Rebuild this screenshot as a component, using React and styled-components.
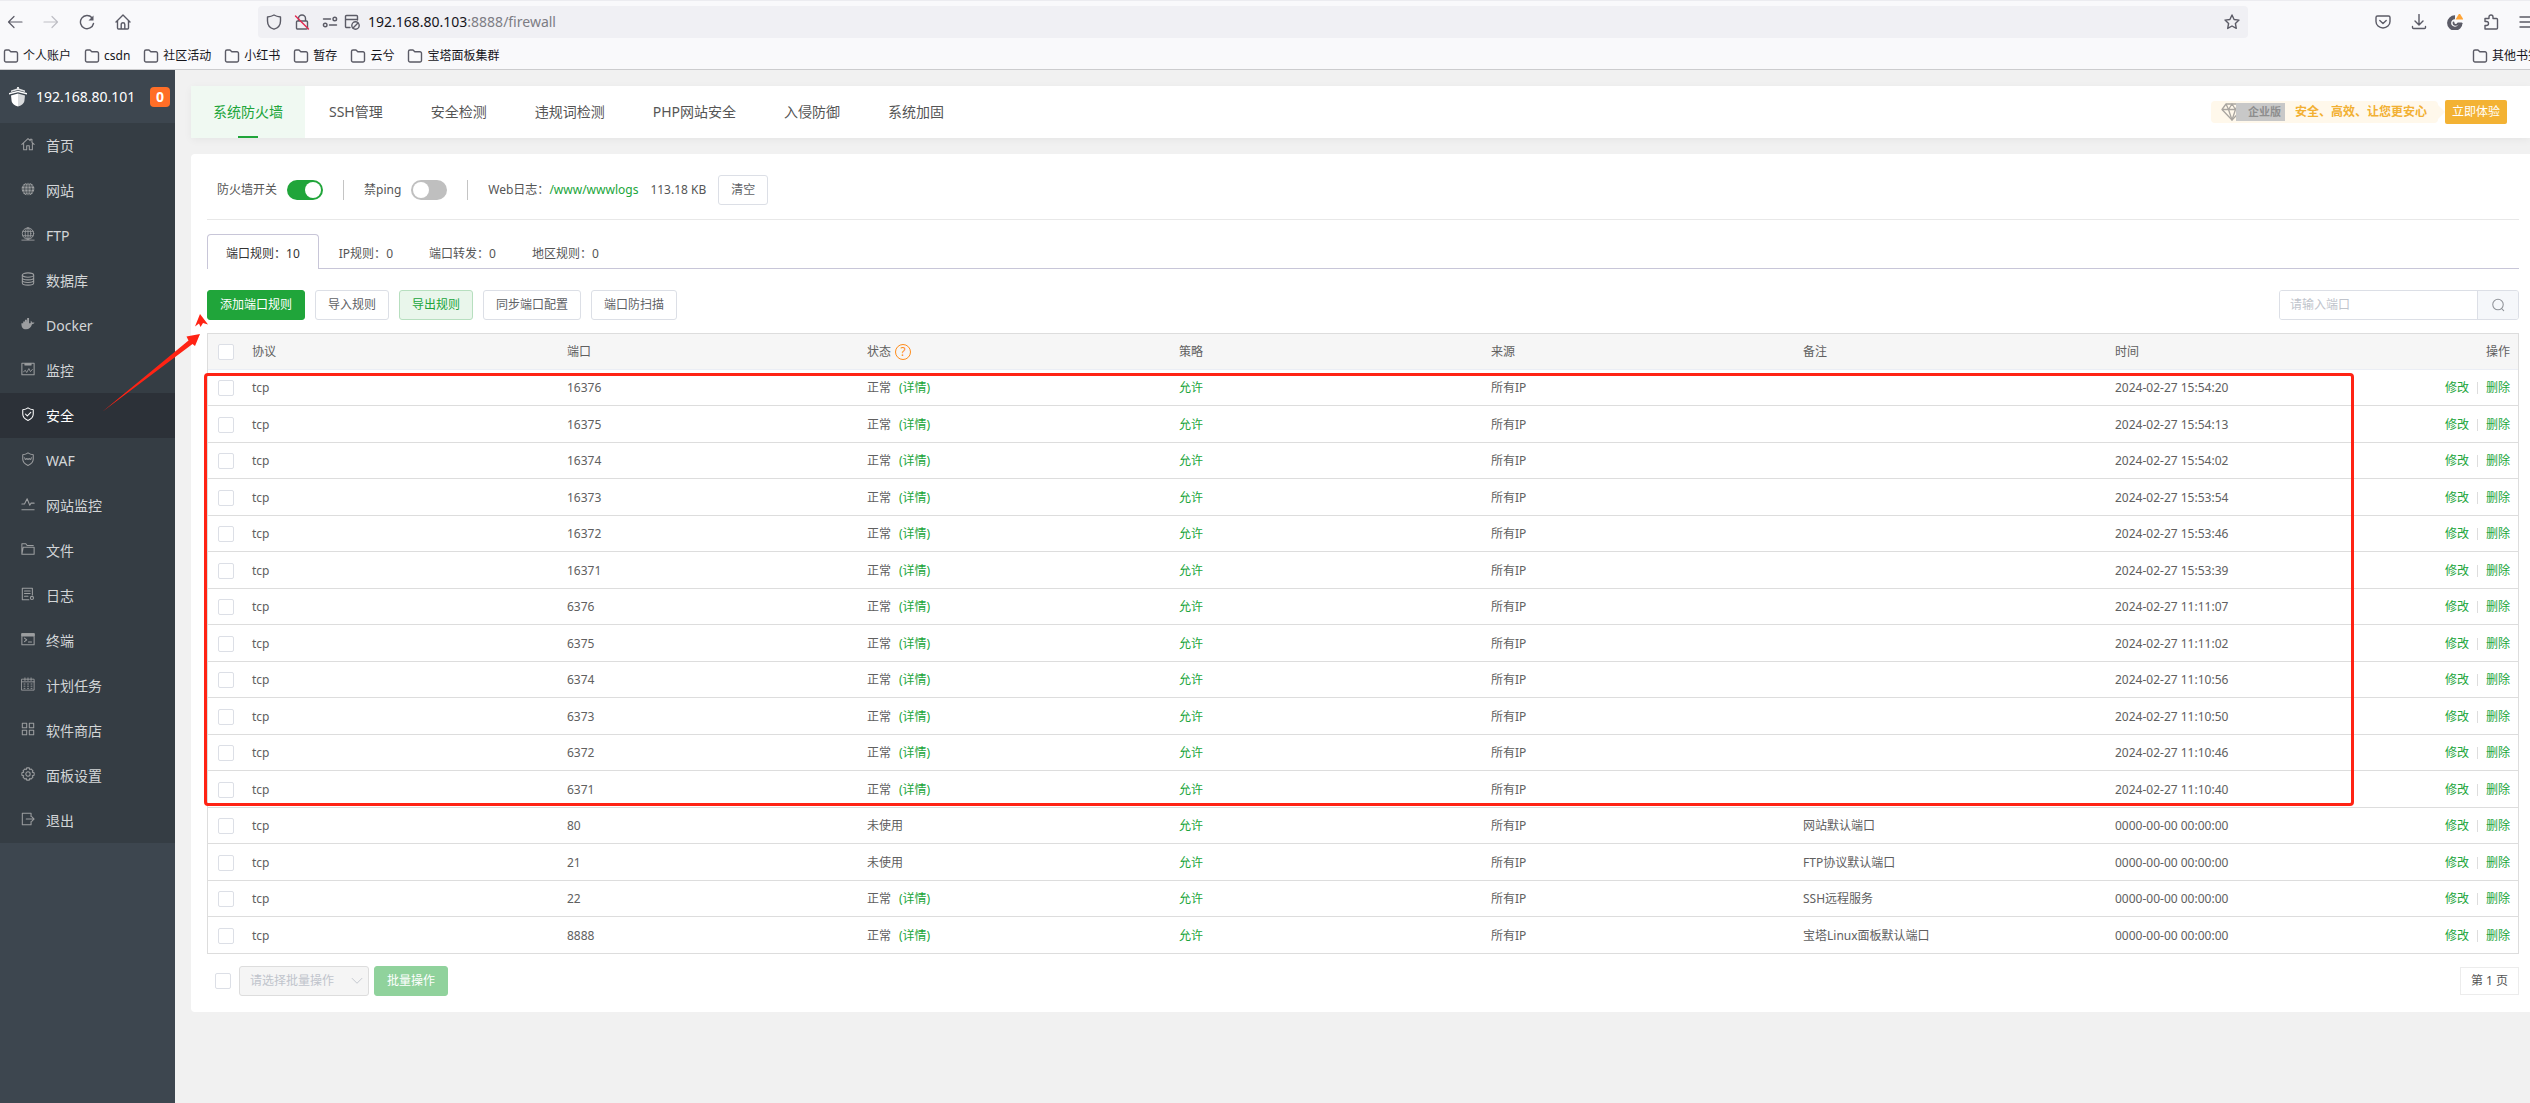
import styled, { createGlobalStyle } from "styled-components";

const GlobalStyle = createGlobalStyle`
    *, *::before, *::after {
        box-sizing: border-box;
    }
    body {
        margin: 0;
        overflow-x: hidden;
        background: #f1f1f1;
        color: #555;
        font-family: "Noto Sans", "Noto Sans CJK SC", sans-serif;
        font-size: 12px;
        line-height: 18px;
    }
    button, input, select {
        font-family: inherit;
        font-size: inherit;
        line-height: inherit;
    }
    a {
        text-decoration: none;
    }
`;

const Window = styled.div`
    display: flex;
    flex-direction: column;
    min-height: 100vh;
    overflow: hidden;
`;

/* browser bar */

const Browser = styled.header`
    background: #f9f9fb;
    border-top: 1px solid #ececf0;
    border-bottom: 1px solid #ccccce;
    color: #15141a;
`;

const NavBar = styled.div`
    display: flex;
    align-items: center;
    height: 42px;
    padding-left: 7px;
`;

const IconButton = styled.button`
    display: flex;
    align-items: center;
    justify-content: center;
    width: ${(p) => p.$width || 36}px;
    height: 32px;
    padding: 0;
    border: none;
    background: none;
    color: ${(p) => (p.$faded ? "#bfbfc5" : "#5b5b66")};
`;

const NavButtons = styled.div`
    display: flex;
    margin-left: -10px;
`;

const AddressBar = styled.div`
    flex: 1;
    display: flex;
    align-items: center;
    height: 32px;
    margin-left: 117px;
    margin-right: 117px;
    padding-left: 2px;
    border-radius: 4px;
    background: #f0f0f4;
`;

const Address = styled.div`
    flex: 1;
    padding-left: 8px;
    font-size: 14px;
    line-height: 20px;
    color: #15141a;

    span {
        color: #7d7d84;
    }
`;

/* the last button runs past the window edge */
const ToolButtons = styled.div`
    display: flex;
    margin-right: -15px;
`;

const BookmarkBar = styled.nav`
    display: flex;
    align-items: center;
    gap: 13px;
    height: 26px;
    padding-left: 3px;
    white-space: nowrap;
`;

const Bookmark = styled.a`
    display: flex;
    align-items: center;
    gap: 4px;
    color: #15141a;

    svg {
        color: #5b5b66;
    }

    &:last-child {
        margin-left: auto;
        margin-right: -10px;
    }
`;

/* panel */

const Page = styled.div`
    position: relative;
    flex: 1;
    display: flex;
`;

const Sidebar = styled.aside`
    width: 175px;
    flex-shrink: 0;
    background: #3d464f;
`;

const Brand = styled.div`
    display: flex;
    align-items: center;
    height: 53px;
    padding: 0 5px 0 9px;
    color: #fff;
    font-size: 14px;
    line-height: 20px;
`;

const BrandName = styled.span`
    flex: 1;
    padding-left: 9px;
`;

const Badge = styled.span`
    width: 20px;
    border-radius: 4px;
    background: #ff6e27;
    font-weight: 700;
    text-align: center;
`;

const Menu = styled.nav`
    display: flex;
    flex-direction: column;
    background: #353d44;
`;

const MenuItem = styled.a`
    display: flex;
    align-items: center;
    gap: 11px;
    height: 45px;
    padding-left: 21px;
    font-size: 14px;
    line-height: 20px;
    color: ${(p) => (p.$active ? "#fff" : "#d3d6d8")};
    background: ${(p) => (p.$active ? "#2c3138" : "transparent")};

    svg {
        margin-bottom: 3px;
        color: ${(p) => (p.$active ? "#fff" : "#9c9ea0")};
    }
`;

const Main = styled.main`
    flex: 1;
    min-width: 0;
    display: flex;
    flex-direction: column;
    align-items: stretch;
    gap: 16px;
    padding: 16px 0 16px 16px;
`;

const TabCard = styled.div`
    display: flex;
    justify-content: space-between;
    align-items: center;
    height: 52px;
    padding-right: 23px;
    border-radius: 4px 0 0 4px;
    background: #fff;
    box-shadow: 0 2px 8px rgba(0, 0, 0, 0.05);
`;

const Tabs = styled.nav`
    display: flex;
`;

const Tab = styled.a`
    display: flex;
    flex-direction: column;
    align-items: center;
    justify-content: center;
    height: 52px;
    padding: 0 ${(p) => (p.$active ? 22 : 24)}px;
    font-size: 14px;
    line-height: 20px;
    color: ${(p) => (p.$active ? "#20a53a" : "#555")};
    background: ${(p) => (p.$active ? "#f0f9f2" : "transparent")};

    &::after {
        content: "";
        width: 20px;
        height: 2px;
        margin-bottom: -16px;
        margin-top: 14px;
        background: ${(p) => (p.$active ? "#20a53a" : "transparent")};
    }
`;

const Promo = styled.div`
    display: flex;
    align-items: center;
`;

const PromoText = styled.div`
    display: flex;
    align-items: center;
    height: 22px;
    padding: 0 11px 0 10px;
    border-radius: 4px;
    background: #fff8eb;
    color: #f2b033;
    font-weight: 700;
`;

const Edition = styled.span`
    height: 18px;
    margin-left: -7px;
    margin-right: 10px;
    padding: 0 4px 0 12px;
    background: #c8c8c8;
    color: #8e8e8e;
    font-size: 11px;
`;

const PromoTip = styled.span`
    border: 7px solid transparent;
    border-right: none;
    border-left-color: #fff8eb;
`;

const PromoButton = styled.button`
    height: 24px;
    padding: 0 7px;
    border: none;
    border-radius: 2px;
    background: #f3b233;
    color: #fff;
`;

const Card = styled.section`
    padding: 21px 11px 16px 16px;
    border-radius: 4px 0 0 4px;
    background: #fff;
`;

const Settings = styled.div`
    display: flex;
    align-items: center;
    gap: 20px;
    padding: 0 10px 14px;
    border-bottom: 1px solid #e8e8e8;
`;

const Setting = styled.label`
    display: flex;
    align-items: center;
    gap: 10px;
`;

const LogInfo = styled.div`
    display: flex;
    align-items: center;
    gap: 12px;
`;

const Divider = styled.span`
    width: 1px;
    height: 20px;
    background: #c4c4c4;
`;

const Switch = styled.input`
    appearance: none;
    display: flex;
    align-items: center;
    width: 36px;
    height: 20px;
    margin: 0;
    padding: 0 2px;
    border-radius: 10px;
    background: #bfbfbf;

    &::before {
        content: "";
        width: 16px;
        height: 16px;
        border-radius: 50%;
        background: #fff;
    }

    &:checked {
        justify-content: flex-end;
        background: #20a53a;
    }
`;

const Link = styled.a`
    color: #20a53a;
`;

const palette = {
    plain: { bg: "#fff", border: "#dcdfe6", text: "#606266" },
    primary: { bg: "#20a53a", border: "#20a53a", text: "#fff" },
    soft: { bg: "#e9f6eb", border: "#b7dfbf", text: "#20a53a" },
    muted: { bg: "#90d29c", border: "#90d29c", text: "#fff" },
};

const Button = styled.button`
    height: 30px;
    padding: 0 12px;
    border: 1px solid ${(p) => palette[p.$kind || "plain"].border};
    border-radius: 3px;
    background: ${(p) => palette[p.$kind || "plain"].bg};
    color: ${(p) => palette[p.$kind || "plain"].text};
`;

const RuleTabs = styled.nav`
    display: flex;
    height: 35px;
    margin-top: 14px;
    box-shadow: inset 0 -1px #c8c6d8;
`;

const RuleTab = styled.a`
    display: flex;
    align-items: center;
    margin-right: ${(p) => (p.$active ? 2 : 0)}px;
    padding: 4px 18px 0;
    border: ${(p) => (p.$active ? "1px solid #c8c6d8" : "none")};
    border-bottom: none;
    border-radius: 4px 4px 0 0;
    background: ${(p) => (p.$active ? "#fff" : "transparent")};
    color: ${(p) => (p.$active ? "#333" : "#555")};
`;

const Toolbar = styled.div`
    display: flex;
    gap: 10px;
    margin: 21px 0 13px;
`;

const Search = styled.form`
    display: flex;
    width: 240px;
    height: 30px;
    margin-left: auto;
    border: 1px solid #dcdfe6;
    border-radius: 3px;
    overflow: hidden;

    input {
        flex: 1;
        min-width: 0;
        padding: 0 10px;
        border: none;
        outline: none;
    }
    input::placeholder {
        color: #c0c4cc;
    }
    button {
        display: flex;
        align-items: center;
        justify-content: center;
        width: 41px;
        padding: 0;
        border: none;
        border-left: 1px solid #dcdfe6;
        background: #f5f7fa;
        color: #909399;
    }
`;

const TableWrap = styled.div`
    position: relative;
`;

const Table = styled.table`
    width: 100%;
    table-layout: fixed;
    border: 1px solid #ddd;
    border-bottom: none;
    border-spacing: 0;

    tr {
        height: 36px;
    }
    tbody tr:nth-child(even) {
        height: 37px;
    }
    th, td {
        padding: 0 10px;
        border-bottom: 1px solid #ddd;
        font-weight: 400;
        text-align: left;
        color: #606060;
        white-space: nowrap;
    }
    tbody tr:nth-child(even) td {
        padding-top: 1px;
    }
    th {
        background: #f6f6f6;
        border-bottom-color: #ebeef5;
    }
    th:last-child, td:last-child {
        padding-right: 8px;
        text-align: right;
    }
`;

const Col = styled.col`
    width: ${(p) => (p.$width ? `${p.$width}px` : "auto")};
`;

const Checkbox = styled.input`
    appearance: none;
    display: block;
    width: 16px;
    height: 16px;
    margin: 0;
    border: 1px solid #dcdfe6;
    border-radius: 2px;
    background: #fff;
`;

const Help = styled.span`
    display: inline-block;
    width: 16px;
    height: 16px;
    margin-left: 4px;
    border: 1px solid #ff8c1a;
    border-radius: 50%;
    color: #ff8c1a;
    line-height: 14px;
    text-align: center;
`;

const Detail = styled(Link)`
    margin-left: 8px;
`;

const Actions = styled.div`
    display: flex;
    align-items: center;
    justify-content: flex-end;
    gap: 8px;

    span {
        width: 1px;
        height: 12px;
        background: #ddd;
    }
`;

const Highlight = styled.div`
    position: absolute;
    top: 40px;
    right: 165px;
    bottom: 148px;
    left: -3px;
    border: 3px solid #ff2314;
    border-radius: 4px;
    pointer-events: none;
`;

const Arrow = styled.svg`
    position: absolute;
    top: 240px;
    left: 100px;
    pointer-events: none;
`;

const TableFooter = styled.div`
    display: flex;
    align-items: center;
    gap: 5px;
    margin-top: 12px;
    padding-left: 8px;
`;

const SelectBox = styled.div`
    display: grid;
    align-items: center;
    width: 130px;
    margin-left: 3px;
    color: #c0c4cc;

    select {
        grid-area: 1 / 1;
        appearance: none;
        height: 30px;
        padding: 0 10px;
        border: 1px solid #ddd;
        border-radius: 3px;
        background: #f5f5f5;
        color: #c0c4cc;
        opacity: 1;
    }
    svg {
        grid-area: 1 / 1;
        justify-self: end;
        margin-right: 6px;
    }
`;

const PageNumber = styled.span`
    margin-left: auto;
    padding: 4px 10px;
    border: 1px solid #ececec;
`;

const Icon = ({ size = 16, width = 1.2, children }) => (
    <svg
        width={size}
        height={size}
        viewBox="0 0 16 16"
        fill="none"
        stroke="currentColor"
        strokeWidth={width}
        strokeLinecap="round"
        strokeLinejoin="round"
        aria-hidden="true"
    >
        {children}
    </svg>
);

const FolderIcon = () => (
    <Icon width={1.4}>
        <path d="M1.500 12.500v-9A1.500 1.500 0 0 1 3 2h3l1.800 1.800H13a1.500 1.500 0 0 1 1.500 1.500v7.200A1.500 1.500 0 0 1 13 14H3a1.500 1.500 0 0 1-1.500-1.500z" />
    </Icon>
);

const menuIcons = {
    home: <path d="M1 8.500L8 1.800l2.500 2.400V2.500h2v3.600L15 8.500M3 7.500v7h3.500v-4.500h3v4.500H13v-7" />,
    site: (
        <>
            <circle cx="8" cy="8" r="7.200" fill="currentColor" stroke="none" />
            <g stroke="#353d44" strokeWidth=".8">
                <ellipse cx="8" cy="8" rx="3.800" ry="7.200" />
                <path d="M8 1v14M1 8h14M2 4.500h12M2 11.500h12" />
            </g>
        </>
    ),
    ftp: (
        <g strokeWidth="1">
            <circle cx="8" cy="7.500" r="6.500" />
            <ellipse cx="8" cy="7.500" rx="3.200" ry="6.500" />
            <path d="M8 1v13M2 5h12M2 10h12M1 15h14" />
        </g>
    ),
    database: (
        <>
            <ellipse cx="8" cy="3.500" rx="6.500" ry="2.500" />
            <path d="M1.500 3.500v9C1.500 14 4.500 15 8 15s6.500-1 6.500-2.500v-9M1.500 6.500C1.500 8 4.500 9 8 9s6.500-1 6.500-2.500M1.500 9.500C1.500 11 4.500 12 8 12s6.500-1 6.500-2.500" />
        </>
    ),
    docker: (
        <path
            fill="currentColor"
            stroke="none"
            d="M.5 7h2V5h2V3h2.200v2h.3V1.200h2.200V7h1.600c.6-.6.5-1.800 0-2.600.9.200 1.700 1 1.800 2 1-.2 2-.1 2.900.3-.6 1-1.700 1.500-2.900 1.500C11.400 12 9.200 14 5.800 14 2 14 .3 11.500.5 7z"
        />
    ),
    monitor: (
        <>
            <path d="M1 1.500h14v13H1z" />
            <path d="M4.500 2h7v1.500h-7z" fill="currentColor" />
            <path d="M3 11l2-1.500 1.500 2.500L9 7.500l1.800 3.500 2.200-2.500" strokeWidth="1" />
        </>
    ),
    shield: (
        <>
            <path d="M8 1c1.800 1.400 3.900 2 6 2.200V8c0 3.700-2.700 6-6 7.300C4.700 14 2 11.700 2 8V3.200C4.100 3 6.200 2.400 8 1z" />
            <path d="M5 8l2.200 2.200 4-4" />
        </>
    ),
    waf: (
        <>
            <path d="M8 1c1.800 1.400 3.900 2 6 2.200V8c0 3.700-2.700 6-6 7.300C4.700 14 2 11.700 2 8V3.200C4.100 3 6.200 2.400 8 1z" />
            <path d="M4 6.500l1 2.500 1-2 1 2 1-2 1 2 1-2 1 2 1-2.500" strokeWidth="1" />
        </>
    ),
    pulse: <path d="M1 8h3l3-6 3 7.500L11.500 7H15M1 14.500h14" />,
    files: <path d="M1 14V2h4.500l1.500 2h7M1 14l1.500-8H15v8H1z" />,
    log: (
        <>
            <path d="M9 14.500H1.500v-13h11.500V9M4 4.500h6.500M4 7.500h6.500M4 10.500h4" />
            <circle cx="12.500" cy="12.500" r="1.800" />
        </>
    ),
    terminal: (
        <>
            <path d="M1 2h14v12.500H1zM1 4.500h14M4 7l2.500 2L4 11M8.500 11.500H12" />
            <path d="M1 2h14v2H1z" fill="currentColor" />
        </>
    ),
    schedule: (
        <g strokeWidth="1">
            <path d="M1 2.500h14v12.500H1zM1 5.500h14M4.500 1v3M8 1v3M11.500 1v3" />
            <path d="M3 8h10M3 10.500h10M3 13h10" strokeDasharray="2 2" strokeLinecap="butt" />
        </g>
    ),
    store: <path d="M1.500 1.500h5v5h-5zM9.500 1.500h5v5h-5zM1.500 9.500h5v5h-5zM9.500 9.500h5v5h-5z" />,
    settings: (
        <>
            <path d="M6.500 1h3l.5 2 1.500-.8 2.200 2.200-.8 1.600 2.100.5v3l-2.100.5.8 1.600-2.200 2.200-1.500-.8-.5 2h-3L6 13l-1.500.8-2.200-2.200.8-1.600L1 9.500v-3l2.100-.5-.8-1.600 2.200-2.200L6 3z" />
            <circle cx="8" cy="8" r="2.500" />
        </>
    ),
    exit: <path d="M11.500 5V1.500h-10v13h10V11M6 8h9M12.500 5.500L15 8l-2.500 2.500" />,
};

const menu = [
    ["首页", "home"],
    ["网站", "site"],
    ["FTP", "ftp"],
    ["数据库", "database"],
    ["Docker", "docker"],
    ["监控", "monitor"],
    ["安全", "shield"],
    ["WAF", "waf"],
    ["网站监控", "pulse"],
    ["文件", "files"],
    ["日志", "log"],
    ["终端", "terminal"],
    ["计划任务", "schedule"],
    ["软件商店", "store"],
    ["面板设置", "settings"],
    ["退出", "exit"],
];

const bookmarks = ["个人账户", "csdn", "社区活动", "小红书", "暂存", "云兮", "宝塔面板集群", "其他书签"];

const tabs = ["系统防火墙", "SSH管理", "安全检测", "违规词检测", "PHP网站安全", "入侵防御", "系统加固"];

const ruleTabs = [
    ["端口规则", 10],
    ["IP规则", 0],
    ["端口转发", 0],
    ["地区规则", 0],
];

const rules = [
    { port: "16376", used: true, time: "2024-02-27 15:54:20" },
    { port: "16375", used: true, time: "2024-02-27 15:54:13" },
    { port: "16374", used: true, time: "2024-02-27 15:54:02" },
    { port: "16373", used: true, time: "2024-02-27 15:53:54" },
    { port: "16372", used: true, time: "2024-02-27 15:53:46" },
    { port: "16371", used: true, time: "2024-02-27 15:53:39" },
    { port: "6376", used: true, time: "2024-02-27 11:11:07" },
    { port: "6375", used: true, time: "2024-02-27 11:11:02" },
    { port: "6374", used: true, time: "2024-02-27 11:10:56" },
    { port: "6373", used: true, time: "2024-02-27 11:10:50" },
    { port: "6372", used: true, time: "2024-02-27 11:10:46" },
    { port: "6371", used: true, time: "2024-02-27 11:10:40" },
    { port: "80", used: false, note: "网站默认端口", time: "0000-00-00 00:00:00" },
    { port: "21", used: false, note: "FTP协议默认端口", time: "0000-00-00 00:00:00" },
    { port: "22", used: true, note: "SSH远程服务", time: "0000-00-00 00:00:00" },
    { port: "8888", used: true, note: "宝塔Linux面板默认端口", time: "0000-00-00 00:00:00" },
];

const BrowserBar = () => (
    <Browser>
        <NavBar>
            <NavButtons>
                <IconButton aria-label="后退">
                    <Icon><path d="M15 8H1.500M7 2.500L1.500 8 7 13.500" /></Icon>
                </IconButton>
                <IconButton $faded aria-label="前进">
                    <Icon><path d="M1 8h13.500M9 2.500L14.500 8 9 13.500" /></Icon>
                </IconButton>
                <IconButton aria-label="刷新">
                    <Icon width={1.4}>
                        <path d="M14.500 9.500A6.600 6.600 0 1 1 13 3.700" />
                        <path d="M14.500 1.500v5h-5z" fill="currentColor" stroke="none" />
                    </Icon>
                </IconButton>
                <IconButton aria-label="主页">
                    <Icon width={1.4}>
                        <path d="M1 8l7-7 7 7M2.500 7v7a1 1 0 0 0 1 1h9a1 1 0 0 0 1-1V7M6.200 15v-4.500a1.800 1.800 0 0 1 3.600 0V15" />
                    </Icon>
                </IconButton>
            </NavButtons>
            <AddressBar>
                <IconButton $width={28} aria-label="跟踪保护">
                    <Icon width={1.4}>
                        <path d="M8 1c2 1.200 4 1.700 6.500 2v4c0 4-2.500 7-6.500 8.200C4 14 1.500 11 1.500 7V3C4 2.700 6 2.200 8 1z" />
                    </Icon>
                </IconButton>
                <IconButton $width={28} aria-label="连接不安全">
                    <Icon width={1.4}>
                        <path d="M4.500 7V4.500a3.500 3.500 0 0 1 7 0V7M3.500 7h9a1 1 0 0 1 1 1v6a1 1 0 0 1-1 1h-9a1 1 0 0 1-1-1V8a1 1 0 0 1 1-1z" />
                        <path d="M1.500 2l13 13" stroke="#e22850" />
                    </Icon>
                </IconButton>
                <IconButton $width={28} aria-label="权限">
                    <Icon width={1.4}>
                        <circle cx="12.800" cy="5" r="1.800" />
                        <circle cx="3.200" cy="11" r="1.800" />
                        <path d="M1.500 5h7M7.500 11h7" />
                    </Icon>
                </IconButton>
                <IconButton $width={16} aria-label="页面设置">
                    <Icon width={1.4}>
                        <path d="M6 13.500H2.500a1 1 0 0 1-1-1v-10a1 1 0 0 1 1-1h10a1 1 0 0 1 1 1V6M1.500 5.500h12" />
                        <circle cx="11.500" cy="11.500" r="3.700" />
                        <path d="M9 14l5-5" />
                    </Icon>
                </IconButton>
                <Address>
                    192.168.80.103<span>:8888/firewall</span>
                </Address>
                <IconButton $width={32} aria-label="收藏">
                    <Icon width={1.4}>
                        <path d="M8 1l2.100 4.500 4.900.6-3.600 3.400.9 4.900L8 12l-4.300 2.400.9-4.900L1 6.100l4.900-.6z" />
                    </Icon>
                </IconButton>
            </AddressBar>
            <ToolButtons>
                <IconButton aria-label="Pocket">
                    <Icon width={1.4}>
                        <path d="M2.500 2h11A1.500 1.500 0 0 1 15 3.500V7.500a7 6.500 0 0 1-14 0v-4A1.500 1.500 0 0 1 2.500 2zM4.800 6.500L8 9.500l3.200-3" />
                    </Icon>
                </IconButton>
                <IconButton aria-label="下载">
                    <Icon width={1.4}>
                        <path d="M8 .500V10.500M4 7l4 4 4-4M1.500 12.500v1a1 1 0 0 0 1 1h11a1 1 0 0 0 1-1v-1" />
                    </Icon>
                </IconButton>
                <IconButton aria-label="账户">
                    <Icon>
                        <path d="M8 3.300A5.700 5.700 0 1 0 13.500 9" strokeWidth="4" strokeLinecap="butt" />
                        <path d="M6.500 8.500a2.300 2.300 0 0 0 4.500.8h3.500" strokeWidth="1.800" />
                        <path d="M12.500-1l4 6.500h-8z" fill="#ffa436" stroke="none" />
                    </Icon>
                </IconButton>
                <IconButton aria-label="扩展">
                    <Icon width={1.4}>
                        <path d="M2 7V4.500h4V3a2 2 0 0 1 4 0v1.500h3.500a1 1 0 0 1 1 1V14a1 1 0 0 1-1 1H2V11.500h1.500a2 2 0 0 0 0-4H2z" />
                    </Icon>
                </IconButton>
                <IconButton aria-label="菜单">
                    <Icon width={1.4}><path d="M1 3h14M1 8h14M1 13h14" /></Icon>
                </IconButton>
            </ToolButtons>
        </NavBar>
        <BookmarkBar>
            {bookmarks.map((name) => (
                <Bookmark key={name} href="#">
                    <FolderIcon />
                    {name}
                </Bookmark>
            ))}
        </BookmarkBar>
    </Browser>
);

const SideMenu = () => (
    <Sidebar>
        <Brand>
            <svg width="18" height="20" viewBox="0 0 18 20" fill="#fff" aria-hidden="true">
                <path d="M8 0h2v1.500l6 2V5L9 3 2 5V3.500l6-2z" opacity=".85" />
                <path d="M0 6l9-2.200L18 6v1.500L9 5.300 0 7.500z" />
                <path d="M2 8.500L9 6.500v13C5 18.500 2.500 16 2.500 13z" />
                <path d="M16 8.500L9 6.500v13c4-1 6.500-3.500 6.500-6.500z" opacity=".8" />
            </svg>
            <BrandName>192.168.80.101</BrandName>
            <Badge>0</Badge>
        </Brand>
        <Menu>
            {menu.map(([name, icon]) => (
                <MenuItem key={name} href="#" $active={name === "安全"}>
                    <Icon size={14}>{menuIcons[icon]}</Icon>
                    {name}
                </MenuItem>
            ))}
        </Menu>
    </Sidebar>
);

const RuleTable = () => (
    <TableWrap>
        <Table>
            <colgroup>
                <Col $width={34} />
                <Col $width={315} />
                <Col $width={300} />
                <Col />
                <Col />
                <Col />
                <Col />
                <Col />
                <Col $width={101} />
            </colgroup>
            <thead>
                <tr>
                    <th><Checkbox type="checkbox" aria-label="全选" /></th>
                    <th>协议</th>
                    <th>端口</th>
                    <th>状态<Help>?</Help></th>
                    <th>策略</th>
                    <th>来源</th>
                    <th>备注</th>
                    <th>时间</th>
                    <th>操作</th>
                </tr>
            </thead>
            <tbody>
                {rules.map((rule) => (
                    <tr key={rule.port}>
                        <td><Checkbox type="checkbox" aria-label={rule.port} /></td>
                        <td>tcp</td>
                        <td>{rule.port}</td>
                        <td>
                            {rule.used ? "正常" : "未使用"}
                            {rule.used && <Detail href="#">(详情)</Detail>}
                        </td>
                        <td><Link href="#">允许</Link></td>
                        <td>所有IP</td>
                        <td>{rule.note}</td>
                        <td>{rule.time}</td>
                        <td>
                            <Actions>
                                <Link href="#">修改</Link>
                                <span />
                                <Link href="#">删除</Link>
                            </Actions>
                        </td>
                    </tr>
                ))}
            </tbody>
        </Table>
        <Highlight />
    </TableWrap>
);

const App = () => {
    return (
        <Window>
            <GlobalStyle />
            <BrowserBar />
            <Page>
                <SideMenu />
                <Main>
                    <TabCard>
                        <Tabs>
                            {tabs.map((name, i) => (
                                <Tab key={name} href="#" $active={i === 0}>{name}</Tab>
                            ))}
                        </Tabs>
                        <Promo>
                            <PromoText>
                                <svg width="22" height="18" viewBox="0 0 22 18" fill="#fff8eb" stroke="#a9a5a0" strokeWidth="1.3" strokeLinejoin="round" aria-hidden="true">
                                    <path d="M5 1h12l4 5.500L11 17 1 6.500z" />
                                    <path d="M1 6.500h20M5 1l2.500 5.500L11 17l3.500-10.500L17 1M7.500 6.500L11 1l3.500 5.500" fill="none" />
                                </svg>
                                <Edition>企业版</Edition>
                                安全、高效、让您更安心
                            </PromoText>
                            <PromoTip />
                            <PromoButton>立即体验</PromoButton>
                        </Promo>
                    </TabCard>
                    <Card>
                        <Settings>
                            <Setting>
                                防火墙开关
                                <Switch type="checkbox" role="switch" defaultChecked />
                            </Setting>
                            <Divider />
                            <Setting>
                                禁ping
                                <Switch type="checkbox" role="switch" />
                            </Setting>
                            <Divider />
                            <LogInfo>
                                <span>Web日志：<Link href="#">/www/wwwlogs</Link></span>
                                <span>113.18 KB</span>
                                <Button>清空</Button>
                            </LogInfo>
                        </Settings>
                        <RuleTabs>
                            {ruleTabs.map(([name, count], i) => (
                                <RuleTab key={name} href="#" $active={i === 0}>
                                    {name}：{count}
                                </RuleTab>
                            ))}
                        </RuleTabs>
                        <Toolbar>
                            <Button $kind="primary">添加端口规则</Button>
                            <Button>导入规则</Button>
                            <Button $kind="soft">导出规则</Button>
                            <Button>同步端口配置</Button>
                            <Button>端口防扫描</Button>
                            <Search>
                                <input type="text" placeholder="请输入端口" aria-label="请输入端口" />
                                <button type="button" aria-label="搜索">
                                    <Icon size={14}>
                                        <circle cx="8" cy="7.500" r="6" />
                                        <path d="M12 12l2.500 2.500" />
                                    </Icon>
                                </button>
                            </Search>
                        </Toolbar>
                        <RuleTable />
                        <TableFooter>
                            <Checkbox type="checkbox" aria-label="全选" />
                            <SelectBox>
                                <select disabled aria-label="批量操作">
                                    <option>请选择批量操作</option>
                                </select>
                                <Icon size={12}><path d="M1.500 4.500L8 11l6.500-6.500" /></Icon>
                            </SelectBox>
                            <Button $kind="muted">批量操作</Button>
                            <PageNumber>第 1 页</PageNumber>
                        </TableFooter>
                    </Card>
                </Main>
                <Arrow width="112" height="106" viewBox="100 310 112 106" fill="#ff2314" aria-hidden="true">
                    <path d="M102 412L188.500 340.500 186.500 336.500 200 334 195 346 192.500 344z" />
                    <path d="M200 314l8 10.500-5-1.500-2.500 4-1.500-3.500-4 3z" />
                </Arrow>
            </Page>
        </Window>
    );
};

export default App;
